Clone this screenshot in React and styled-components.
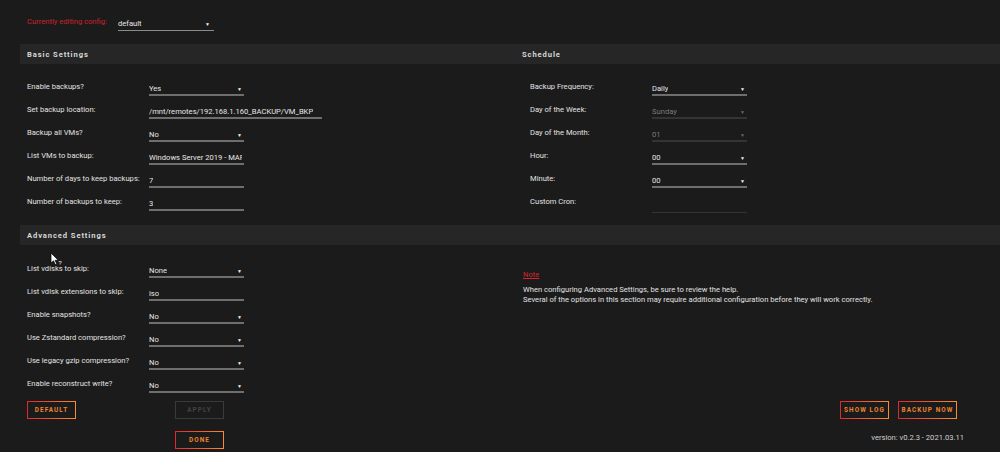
import React from "react";
import styled, { createGlobalStyle } from "styled-components";

const GlobalStyle = createGlobalStyle`
  html, body {
    margin: 0;
    padding: 0;
    background: #1c1b1b;
  }
  body {
    font-family: Roboto, "Liberation Sans", sans-serif;
    color: #e4e4e4;
  }
`;

const basicRows = [
  { label: "Enable backups?", value: "Yes", select: true },
  { label: "Set backup location:", value: "/mnt/remotes/192.168.1.160_BACKUP/VM_BKP", wide: true },
  { label: "Backup all VMs?", value: "No", select: true },
  { label: "List VMs to backup:", value: "Windows Server 2019 - MARK" },
  { label: "Number of days to keep backups:", value: "7" },
  { label: "Number of backups to keep:", value: "3" },
];

const scheduleRows = [
  { label: "Backup Frequency:", value: "Daily", select: true },
  { label: "Day of the Week:", value: "Sunday", select: true, disabled: true },
  { label: "Day of the Month:", value: "01", select: true, disabled: true },
  { label: "Hour:", value: "00", select: true },
  { label: "Minute:", value: "00", select: true },
  { label: "Custom Cron:", value: "", faint: true },
];

const advancedRows = [
  { label: "List vdisks to skip:", value: "None", select: true },
  { label: "List vdisk extensions to skip:", value: "iso" },
  { label: "Enable snapshots?", value: "No", select: true },
  { label: "Use Zstandard compression?", value: "No", select: true },
  { label: "Use legacy gzip compression?", value: "No", select: true },
  { label: "Enable reconstruct write?", value: "No", select: true },
];

function Row({ label, value, select, wide, disabled, faint }) {
  return (
    <FieldRow>
      <Label>{label}</Label>
      <Field $wide={wide} $disabled={disabled} $faint={faint}>
        <Value $disabled={disabled}>{value}</Value>
        {select && <Caret $disabled={disabled}>▼</Caret>}
      </Field>
    </FieldRow>
  );
}

function HelpCursor() {
  return (
    <Cursor width="14" height="16" viewBox="0 0 14 16">
      <path d="M1 1 L1 11 L3.5 8.8 L5.3 12.6 L6.8 11.9 L5.1 8.3 L8.3 8.3 Z" fill="#fff" stroke="#000" strokeWidth="0.7" />
      <text x="8.5" y="13" fontSize="5.5" fill="#fff" fontFamily="Liberation Sans, sans-serif">?</text>
    </Cursor>
  );
}

export default function App() {
  return (
    <>
      <GlobalStyle />
      <Page>
        <ConfigRow>
          <ConfigLabel>Currently editing config:</ConfigLabel>
          <ConfigField>
            <Value>default</Value>
            <Caret>▼</Caret>
          </ConfigField>
        </ConfigRow>

        <Bar>
          <BarTitle>Basic Settings</BarTitle>
          <BarTitle>Schedule</BarTitle>
        </Bar>
        <Columns $top={17} $bottom={12}>
          <RowList>
            {basicRows.map((r) => (
              <Row key={r.label} {...r} />
            ))}
          </RowList>
          <RowList $indent>
            {scheduleRows.map((r) => (
              <Row key={r.label} {...r} />
            ))}
          </RowList>
        </Columns>

        <Bar>
          <BarTitle>Advanced Settings</BarTitle>
          <span />
        </Bar>
        <Columns $top={18} $bottom={6}>
          <RowList>
            {advancedRows.map((r) => (
              <Row key={r.label} {...r} />
            ))}
          </RowList>
          <NoteBox>
            <NoteTitle>Note</NoteTitle>
            <NoteText>
              When configuring Advanced Settings, be sure to review the help.
              <br />
              Several of the options in this section may require additional configuration before they will work correctly.
            </NoteText>
          </NoteBox>
        </Columns>

        <Columns>
          <LeftButtons>
            <Button $w={49}>Default</Button>
            <Button $w={49} disabled>Apply</Button>
            <DoneButton $w={49}>Done</DoneButton>
          </LeftButtons>
          <RightFooter>
            <ButtonGroup>
              <Button $w={49}>Show Log</Button>
              <Button $w={59}>Backup Now</Button>
            </ButtonGroup>
            <Version>version: v0.2.3 - 2021.03.11</Version>
          </RightFooter>
        </Columns>
        <HelpCursor />
      </Page>
    </>
  );
}

const Page = styled.div`
  position: relative;
  width: 1000px;
  height: 452px;
  padding-left: 20px;
  box-sizing: border-box;
  overflow: hidden;
  font-size: 7.6px;
`;

const ConfigRow = styled.div`
  display: flex;
  align-items: flex-start;
  padding: 16px 0 0 7px;
  height: 28px;
`;

const ConfigLabel = styled.div`
  width: 91px;
  line-height: 12px;
  color: #c8232a;
`;

const ConfigField = styled.div`
  display: flex;
  align-items: center;
  justify-content: space-between;
  width: 96px;
  box-sizing: border-box;
  padding: 2px 4px 0 0;
  line-height: 12px;
  border-bottom: 1px solid #8a8a8a;
`;

const Bar = styled.div`
  display: grid;
  grid-template-columns: 495px 1fr;
  height: 20px;
  align-items: center;
  background: #262626;
`;

const BarTitle = styled.div`
  padding-left: 7px;
  font-size: 7.6px;
  font-weight: 700;
  letter-spacing: 0.9px;
  color: #d8d8d8;
`;

const Columns = styled.div`
  display: grid;
  grid-template-columns: 495px 1fr;
  padding-top: ${(p) => p.$top || 0}px;
  padding-bottom: ${(p) => p.$bottom || 0}px;
`;

const RowList = styled.div`
  display: flex;
  flex-direction: column;
  gap: 6px;
  padding-left: ${(p) => (p.$indent ? 15 : 7)}px;
`;

const FieldRow = styled.div`
  display: flex;
  align-items: flex-start;
  height: 17px;
`;

const Label = styled.div`
  width: 122px;
  flex-shrink: 0;
  line-height: 12px;
  color: #e2e2e2;
`;

const Field = styled.div`
  display: flex;
  align-items: center;
  justify-content: space-between;
  width: ${(p) => (p.$wide ? 173 : 95)}px;
  height: 15px;
  box-sizing: border-box;
  padding: 3px 2px 0 0;
  overflow: hidden;
  white-space: nowrap;
  border-bottom: 2px solid
    ${(p) => (p.$faint || p.$disabled ? "#343434" : "#6e6e6e")};
  ${(p) => p.$faint && "border-bottom-width: 1px; height: 17px;"}
`;

const Value = styled.span`
  line-height: 12px;
  overflow: hidden;
  color: ${(p) => (p.$disabled ? "#7a7a7a" : "#e6e6e6")};
`;

const Caret = styled.span`
  font-size: 5px;
  line-height: 12px;
  color: ${(p) => (p.$disabled ? "#6a6a6a" : "#f0f0f0")};
`;

const NoteBox = styled.div`
  padding: 6px 0 0 8px;
`;

const NoteTitle = styled.div`
  color: #d2262b;
  text-decoration: underline;
  line-height: 12px;
  margin-bottom: 4px;
`;

const NoteText = styled.div`
  line-height: 10px;
  color: #e2e2e2;
`;

const Button = styled.button`
  width: ${(p) => p.$w}px;
  height: 18px;
  padding: 0;
  box-sizing: border-box;
  background: transparent;
  border: 1.5px solid transparent;
  border-image: linear-gradient(90deg, #e0282f, #f98b2f) 1;
  font-family: Roboto, "Liberation Sans", sans-serif;
  font-size: 6.4px;
  font-weight: 700;
  letter-spacing: 1.1px;
  text-transform: uppercase;
  color: #ee8430;
  white-space: nowrap;
  cursor: pointer;

  &:disabled {
    border-image: none;
    border-color: #3a3a3a;
    color: #444;
  }
`;

const LeftButtons = styled.div`
  display: grid;
  grid-template-columns: 148px 49px;
  grid-template-rows: 18px 18px;
  row-gap: 12px;
  padding-left: 7px;
`;

const DoneButton = styled(Button)`
  grid-column: 2;
`;

const RightFooter = styled.div`
  display: flex;
  flex-direction: column;
  align-items: flex-end;
  padding-right: 43px;
`;

const ButtonGroup = styled.div`
  display: flex;
  gap: 9px;
`;

const Version = styled.div`
  margin: 13px -7px 0 0;
  line-height: 12px;
  color: #d0d0d0;
`;

const Cursor = styled.svg`
  position: absolute;
  left: 50px;
  top: 252px;
`;
